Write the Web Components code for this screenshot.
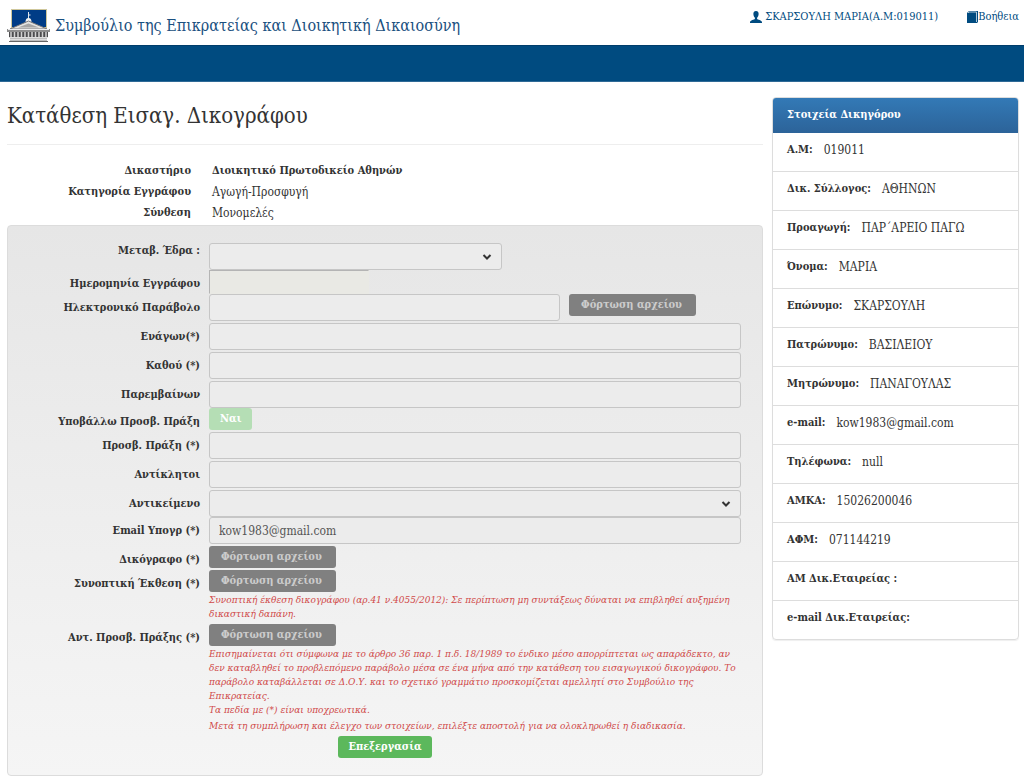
<!DOCTYPE html>
<html lang="el">
<head>
<meta charset="utf-8">
<meta name="viewport" content="width=device-width, initial-scale=1">
<title>Κατάθεση Εισαγ. Δικογράφου</title>
<style>
  body {
    margin: 0;
    background: #fff;
    color: #333;
    font-family: "Roboto Slab", "DejaVu Serif Condensed", "DejaVu Serif", serif;
    font-size: 11px;
    line-height: 16px;
  }
</style>
</head>
<body>
<court-app></court-app>

<template id="t-app">
  <style>
    :host { display: block; }
    .nav { height: 35px; background: #004b80; border-top: 1px solid #003d6b; border-bottom: 1px solid #2f6a96; }
    .cols { display: grid; grid-template-columns: minmax(0, 1fr) 247px; gap: 9px; padding: 0 5px 6px 7px; align-items: start; }
    h1 { margin: 0; padding: 19px 0 13px; font-size: 22px; line-height: 30px; font-weight: 400; border-bottom: 1px solid #eee; }
    dl { display: grid; grid-template-columns: 184px minmax(0, 1fr); column-gap: 21px; row-gap: 5px; margin: 0; padding: 18px 0 4px; }
    dt { text-align: right; font-weight: 700; color: #333; }
    dd { margin: 0; font-size: 12px; }
    dd.strong { font-size: 11px; font-weight: 700; }
    aside { padding-top: 15px; }
  </style>
  <site-header></site-header>
  <nav class="nav" aria-label="Κύριο μενού"></nav>
  <div class="cols">
    <main>
      <h1>Κατάθεση Εισαγ. Δικογράφου</h1>
      <dl>
        <dt>Δικαστήριο</dt><dd class="strong">Διοικητικό Πρωτοδικείο Αθηνών</dd>
        <dt>Κατηγορία Εγγράφου</dt><dd>Αγωγή-Προσφυγή</dd>
        <dt>Σύνθεση</dt><dd>Μονομελές</dd>
      </dl>
      <filing-form>
        <form-row kind="select" label="Μεταβ. Έδρα :" size="medium" tight raised></form-row>
        <form-row kind="date" label="Ημερομηνία Εγγράφου" tight></form-row>
        <form-row kind="text" label="Ηλεκτρονικό Παράβολο" size="large"><upload-button slot="extra"></upload-button></form-row>
        <form-row kind="text" label="Ενάγων(*)"></form-row>
        <form-row kind="text" label="Καθού (*)"></form-row>
        <form-row kind="text" label="Παρεμβαίνων" tight></form-row>
        <form-row kind="toggle" label="Υποβάλλω Προσβ. Πράξη"></form-row>
        <form-row kind="text" label="Προσβ. Πράξη (*)"></form-row>
        <form-row kind="text" label="Αντίκλητοι"></form-row>
        <form-row kind="select" label="Αντικείμενο" tight></form-row>
        <form-row kind="text" label="Email Υπογρ (*)" value="kow1983@gmail.com"></form-row>
        <form-row kind="upload" label="Δικόγραφο (*)"></form-row>
        <form-row kind="upload" label="Συνοπτική Έκθεση (*)">
          <form-note slot="note">Συνοπτική έκθεση δικογράφου (αρ.41 ν.4055/2012): Σε περίπτωση μη συντάξεως δύναται να επιβληθεί αυξημένη δικαστική δαπάνη.</form-note>
        </form-row>
        <form-row kind="upload" label="Αντ. Προσβ. Πράξης (*)">
          <form-note slot="note">Επισημαίνεται ότι σύμφωνα με το άρθρο 36 παρ. 1 π.δ. 18/1989 το ένδικο μέσο απορρίπτεται ως απαράδεκτο, αν δεν καταβληθεί το προβλεπόμενο παράβολο μέσα σε ένα μήνα από την κατάθεση του εισαγωγικού δικογράφου. Το παράβολο καταβάλλεται σε Δ.Ο.Υ. και το σχετικό γραμμάτιο προσκομίζεται αμελλητί στο Συμβούλιο της Επικρατείας.<br>Τα πεδία με (*) είναι υποχρεωτικά.</form-note>
          <form-note slot="note">Μετά τη συμπλήρωση και έλεγχο των στοιχείων, επιλέξτε αποστολή για να ολοκληρωθεί η διαδικασία.</form-note>
        </form-row>
      </filing-form>
    </main>
    <aside>
      <info-panel heading="Στοιχεία Δικηγόρου">
        <info-item term="Α.Μ:">019011</info-item>
        <info-item term="Δικ. Σύλλογος:">ΑΘΗΝΩΝ</info-item>
        <info-item term="Προαγωγή:">ΠΑΡ΄ΑΡΕΙΟ ΠΑΓΩ</info-item>
        <info-item term="Όνομα:">ΜΑΡΙΑ</info-item>
        <info-item term="Επώνυμο:">ΣΚΑΡΣΟΥΛΗ</info-item>
        <info-item term="Πατρώνυμο:">ΒΑΣΙΛΕΙΟΥ</info-item>
        <info-item term="Μητρώνυμο:">ΠΑΝΑΓΟΥΛΑΣ</info-item>
        <info-item term="e-mail:">kow1983@gmail.com</info-item>
        <info-item term="Τηλέφωνα:">null</info-item>
        <info-item term="ΑΜΚΑ:">15026200046</info-item>
        <info-item term="ΑΦΜ:">071144219</info-item>
        <info-item term="ΑΜ Δικ.Εταιρείας :"></info-item>
        <info-item term="e-mail Δικ.Εταιρείας:"></info-item>
      </info-panel>
    </aside>
  </div>
</template>

<template id="t-header">
  <style>
    :host { display: block; }
    header { display: flex; justify-content: space-between; align-items: flex-start; height: 45px; padding: 0 5px 0 7px; box-sizing: border-box; color: #004b80; }
    a { color: inherit; text-decoration: none; display: flex; align-items: center; }
    .brand { gap: 5px; padding-top: 8px; font-size: 16px; line-height: 32px; color: #1a5080; }
    .brand svg { display: block; margin-top: 1px; }
    .links { display: flex; gap: 29px; padding-top: 9px; }
    .user { gap: 3px; }
    .links svg { display: block; flex: none; }
  </style>
  <header>
    <a class="brand" href="#">
      <svg width="43" height="34" viewBox="0 0 43 34" aria-hidden="true">
        <rect x="4.500" y=".5" width="35" height="18" fill="#003c86" stroke="#cfc79b"/>
        <path d="M21.500 3v7M21.500 6h2" stroke="#dfe4ea" fill="none"/>
        <path d="M18.500 13q0-4 3-4t3 4z" fill="#eef0f2"/>
        <path d="M3 20 21.500 12 40 20z" fill="#e4e4e2" stroke="#77777a"/>
        <path d="M11 18.500 21.500 14.500 32 18.500z" fill="#a6a6a6"/>
        <path d="M0 20h43v3H0z" fill="#8d8d8d"/><path d="M1 20.500h41" stroke="#eee"/>
        <path d="M2 23h39v5H2z" fill="#4c4c4e"/>
        <path d="M4 23v5M7.500 23v5M11 23v5M14.500 23v5M18 23v5M21.500 23v5M25 23v5M28.500 23v5M32 23v5M35.500 23v5M39 23v5" stroke="#d2d2d2" stroke-width="1.500"/>
        <path d="M3 28h37v5H3z" fill="#bdbdbd"/>
        <path d="M2 28.500h39M3 30.500h37" stroke="#dedede"/><path d="M2 32.500h39" stroke="#666"/>
      </svg>
      <span>Συμβούλιο της Επικρατείας και Διοικητική Δικαιοσύνη</span>
    </a>
    <div class="links">
      <a class="user" href="#">
        <svg width="12" height="12" viewBox="0 0 12 12" fill="#004b80" aria-hidden="true"><path d="M6 0C4 0 3.200 1.400 3.400 3.200 3.500 4.700 4 6 4.900 6.700V8C4.500 8.800 0 9 0 11.200V12H12V11.200C12 9 7.500 8.800 7.100 8V6.700C8 6 8.500 4.700 8.600 3.200 8.800 1.400 8 0 6 0Z"/></svg>
        <span>ΣΚΑΡΣΟΥΛΗ ΜΑΡΙΑ(Α.Μ:019011)</span>
      </a>
      <a href="#">
        <svg width="11" height="12" viewBox="0 0 11 12" aria-hidden="true"><path d="M2 0H11V11L10 12H0V2Z" fill="#004b80"/><path d="M1 2 2 1H9.500V11" stroke="#fff" stroke-width=".7" fill="none"/></svg>
        <span>Βοήθεια</span>
      </a>
    </div>
  </header>
</template>

<template id="t-form">
  <style>
    :host { display: block; }
    form { display: flex; flex-direction: column; padding: 17px 21px 17px 0; border: 1px solid #dcdcdc; border-radius: 4px; background: linear-gradient(#e6e6e6, #f5f5f5); }
    button { align-self: center; height: 22px; margin-left: 21px; padding: 0 10px; border: 0; border-radius: 3px; background: #5cb85c; color: #fff; font: inherit; font-weight: 700; }
  </style>
  <form>
    <slot></slot>
    <button type="button">Επεξεργασία</button>
  </form>
</template>

<template id="t-row">
  <style>
    :host { display: grid; grid-template-columns: 192px minmax(0, 1fr); column-gap: 9px; padding-bottom: 2px; align-items: start; }
    :host([tight]) { padding-bottom: 0; }
    label { height: 22px; line-height: 28px; text-align: right; font-weight: 700; white-space: nowrap; }
    :host([raised]) label { line-height: 16px; }
    .line { display: flex; align-items: flex-start; gap: 9px; }
    input, select { box-sizing: border-box; width: 100%; height: 27px; margin: 0; padding: 0 9px; border: 1px solid #c6c6c6; border-radius: 3px; background: #ececec; color: #555; font: inherit; font-size: 12px; }
    select { appearance: none; }
    .pick { display: grid; width: 100%; align-items: center; }
    .pick > * { grid-area: 1 / 1; }
    .pick svg { justify-self: end; margin-right: 10px; pointer-events: none; }
    :host([size="medium"]) .pick { width: 55%; }
    :host([size="large"]) input { width: 66%; }
    .date { width: 30%; height: 24px; border-radius: 0; border-color: #b4b4b4 transparent transparent #b4b4b4; background: #e9e9e4; }
    .toggle { height: 22px; padding: 0 11px; border: 0; border-radius: 3px; background: #b5deb5; color: #fff; font: inherit; font-weight: 700; }
  </style>
  <label for="field"></label>
  <div>
    <div class="line"><slot name="extra"></slot></div>
    <slot name="note"></slot>
  </div>
</template>

<template id="t-upload">
  <style>
    :host { display: block; flex: none; }
    button { display: block; width: 127px; height: 22px; padding: 0 12px; border: 0; border-radius: 3px; background: #808080; color: #ccc; font: inherit; font-weight: 700; text-align: left; white-space: nowrap; }
  </style>
  <button type="button">Φόρτωση αρχείου</button>
</template>

<template id="t-note">
  <style>
    :host { display: block; padding: 1px 0; font-size: 10px; line-height: 14px; font-style: italic; color: #d04a4a; }
  </style>
  <slot></slot>
</template>

<template id="t-panel">
  <style>
    :host { display: block; border: 1px solid #ddd; border-radius: 4px; overflow: hidden; box-shadow: 0 1px 1px #0001; }
    h2 { margin: -1px -1px 0; padding: 10px 15px; background: linear-gradient(#337ab7, #2c6399); border-radius: 4px 4px 0 0; color: #fff; font-size: 11px; line-height: 16px; font-weight: 700; }
  </style>
  <h2></h2>
  <slot></slot>
</template>

<template id="t-item">
  <style>
    :host { display: flex; gap: 11px; padding: 9px 14px 13px; border-top: 1px solid #ddd; }
    :host(:first-of-type) { border-top: 0; }
    strong { font-weight: 700; }
    span { font-size: 12px; }
  </style>
  <strong></strong>
  <span><slot></slot></span>
</template>

<script>
  class Base extends HTMLElement {
    constructor() {
      super();
      this.attachShadow({ mode: "open" })
        .append(document.getElementById(this.constructor.template).content.cloneNode(true));
    }
    $(selector) { return this.shadowRoot.querySelector(selector); }
  }

  class SiteHeader extends Base { static template = "t-header"; }
  class FilingForm extends Base { static template = "t-form"; }
  class FormNote extends Base { static template = "t-note"; }

  // Form-associated so that a row's <label for> can point at it.
  class UploadButton extends Base {
    static template = "t-upload";
    static formAssociated = true;
  }

  class InfoPanel extends Base {
    static template = "t-panel";
    connectedCallback() { this.$("h2").textContent = this.getAttribute("heading"); }
  }

  class InfoItem extends Base {
    static template = "t-item";
    connectedCallback() { this.$("strong").textContent = this.getAttribute("term"); }
  }

  class FormRow extends Base {
    static template = "t-row";
    static controls = {
      text: '<input id="field" type="text">',
      date: '<input id="field" class="date" type="text" disabled>',
      select: '<div class="pick"><select id="field"><option></option></select>' +
        '<svg width="10" height="8" viewBox="0 0 10 8" aria-hidden="true"><path d="M1.500 2 5 5.500 8.500 2" fill="none" stroke="#333" stroke-width="2"/></svg></div>',
      toggle: '<button id="field" class="toggle" type="button">Ναι</button>',
      upload: '<upload-button id="field"></upload-button>'
    };
    connectedCallback() {
      if (this.ready) return;
      this.ready = true;
      this.$("label").textContent = this.getAttribute("label");
      this.$(".line").insertAdjacentHTML("afterbegin", FormRow.controls[this.getAttribute("kind")]);
      if (this.hasAttribute("value")) this.$("input").value = this.getAttribute("value");
    }
  }

  class CourtApp extends Base { static template = "t-app"; }

  customElements.define("site-header", SiteHeader);
  customElements.define("form-note", FormNote);
  customElements.define("upload-button", UploadButton);
  customElements.define("form-row", FormRow);
  customElements.define("filing-form", FilingForm);
  customElements.define("info-item", InfoItem);
  customElements.define("info-panel", InfoPanel);
  customElements.define("court-app", CourtApp);
</script>
</body>
</html>
